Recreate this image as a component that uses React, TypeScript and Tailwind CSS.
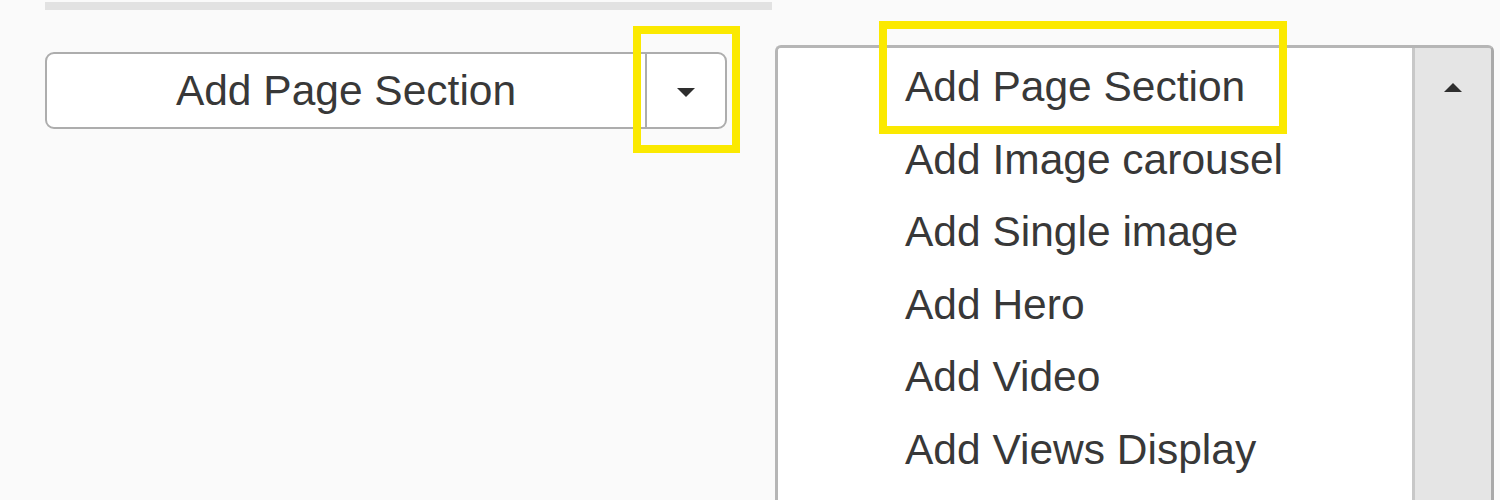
const items = [
  "Add Page Section",
  "Add Image carousel",
  "Add Single image",
  "Add Hero",
  "Add Video",
  "Add Views Display",
];

function Highlight({ className }: { className: string }) {
  return (
    <div
      className={`absolute border-[8px] border-[#fbe900] pointer-events-none ${className}`}
    />
  );
}

export default function App() {
  return (
    <div className="relative flex w-[1500px] h-[500px] overflow-hidden bg-[#fafafa] font-['Liberation_Sans',Arial,sans-serif] text-[#383838]">
      {/* left column: field with split button */}
      <div className="w-[775px] shrink-0 pl-[45px] pt-[2px]">
        <div className="h-[8px] w-[727px] bg-[#e2e2e2]" />
        <div className="mt-[42px] flex h-[77px] w-[682px] rounded-[9px] border-2 border-[#adadad] bg-white">
          <div className="flex flex-1 items-center justify-center text-[42.5px]">
            Add Page Section
          </div>
          <div className="flex w-[80px] items-center justify-center border-l-2 border-[#adadad]">
            <svg width="18" height="9" viewBox="0 0 18 9" className="mt-[3px]">
              <polygon points="0,0 18,0 9,9" fill="#2e2e2e" />
            </svg>
          </div>
        </div>
      </div>

      {/* right column: open list */}
      <div className="pt-[45px]">
        <div className="flex h-[470px] w-[719px] overflow-hidden rounded-t-[6px] border-[3px] border-b-0 border-[#b6b6b6] border-r-[#a9a9a9] shadow-[inset_1px_1px_0_#dcdcdc]">
          <ul className="flex-1 bg-white pl-[127px] pt-[3px] text-[42.5px] leading-[72.5px]">
            {items.map((item) => (
              <li key={item}>{item}</li>
            ))}
          </ul>
          <div className="flex w-[79px] justify-center border-l-[3px] border-[#c8c8c8] bg-[#e5e5e5] pt-[35px]">
            <svg width="18" height="9" viewBox="0 0 18 9">
              <polygon points="9,0 18,9 0,9" fill="#2e2e2e" />
            </svg>
          </div>
        </div>
      </div>

      {/* annotation boxes */}
      <Highlight className="left-[633px] top-[26px] w-[107px] h-[127px]" />
      <Highlight className="left-[879px] top-[21px] w-[408px] h-[113px]" />
    </div>
  );
}
